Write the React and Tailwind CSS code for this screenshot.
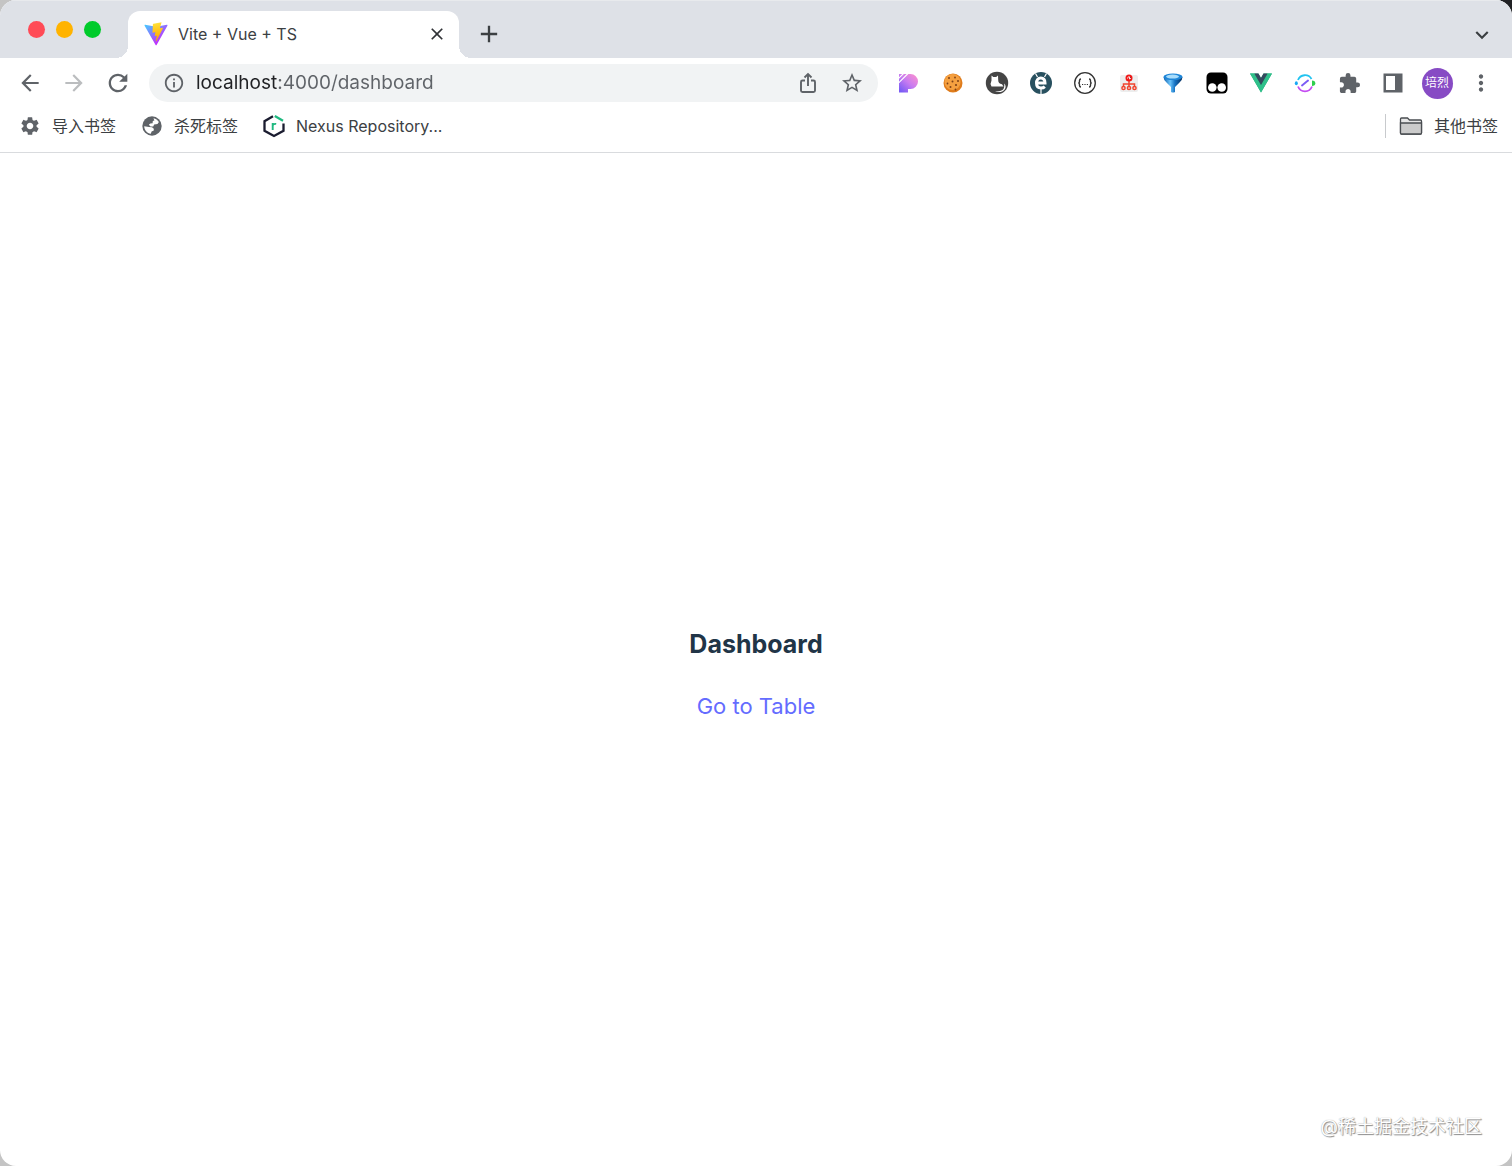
import React, { useState } from "react";
import {
  MdAdd,
  MdArrowBack,
  MdArrowForward,
  MdClose,
  MdExpandMore,
  MdExtension,
  MdInfoOutline,
  MdMoreVert,
  MdRefresh,
  MdSettings,
  MdStarOutline,
} from "react-icons/md";

const ViteLogo = () => (
  <svg width="24" height="24" viewBox="0 0 410 404">
    <defs>
      <linearGradient id="viteA" x1="6" y1="33" x2="235" y2="344" gradientUnits="userSpaceOnUse">
        <stop stopColor="#41D1FF" />
        <stop offset="1" stopColor="#BD34FE" />
      </linearGradient>
      <linearGradient id="viteB" x1="194" y1="8" x2="236" y2="292" gradientUnits="userSpaceOnUse">
        <stop stopColor="#FFEA83" />
        <stop offset="0.08" stopColor="#FFDD35" />
        <stop offset="1" stopColor="#FFA800" />
      </linearGradient>
    </defs>
    <path
      fill="url(#viteA)"
      d="M399.6 59.5 215.6 388.500c-3.800 6.800-13.500 6.800-17.400.1L10.600 59.500c-4.200-7.300 2.100-16.200 10.400-14.700l184.200 32.900c1.200.2 2.400.2 3.500 0l180.300-32.900c8.300-1.500 14.600 7.300 10.500 14.700z"
    />
    <path
      fill="url(#viteB)"
      d="M293 1.600 156.800 28.300c-2.200.4-3.900 2.300-4 4.600l-8.400 141.500c-.2 3.300 2.900 5.900 6.100 5.200l37.900-8.800c3.500-.8 6.700 2.300 6 5.900l-11.300 55.200c-.8 3.700 2.700 6.900 6.400 5.800l23.400-7.100c3.600-1.100 7.100 2.100 6.400 5.800l-17.900 86.700c-1.100 5.400 6.100 8.400 9.100 3.700l2-3.100L323.500 102.300c1.900-3.700-1.300-7.900-5.400-7.100l-39 7.500c-3.700.7-6.800-2.700-5.700-6.200l25.400-88.200c1.100-3.600-2.100-7.100-5.800-6.700z"
    />
  </svg>
);

const ShareIcon = () => (
  <svg width="22" height="24" viewBox="0 0 22 24" fill="none" stroke="currentColor" strokeWidth="1.9">
    <path d="M8 9.500H5.500Q4 9.500 4 11v8.500Q4 21 5.500 21h11Q18 21 18 19.500V11q0-1.500-1.500-1.500H14" />
    <path d="M11 15V3.500M7.500 6.500 11 3l3.500 3.500" />
  </svg>
);

const SidePanelIcon = () => (
  <svg width="20" height="20" viewBox="0 0 20 20">
    <path fill="#5f6368" fillRule="evenodd" d="M.5.500h19v19H.5zM3 3v14h9V3z" />
  </svg>
);

const PasteIcon = () => (
  <svg width="20" height="20" viewBox="0 0 20 20">
    <defs>
      <linearGradient id="pGrad" x1="18" y1="2" x2="3" y2="19" gradientUnits="userSpaceOnUse">
        <stop stopColor="#fb8fd0" />
        <stop offset="0.5" stopColor="#c97cf0" />
        <stop offset="1" stopColor="#7a5cf5" />
      </linearGradient>
    </defs>
    <path fill="url(#pGrad)" d="M0 1h11.500a7.500 7.500 0 0 1 0 15H9v3.500H0z" />
    <path stroke="#fff" strokeWidth="1.200" d="M-1 6 5 0M-1 10.500 9.500 0" />
  </svg>
);

const CookieIcon = () => (
  <svg width="20" height="20" viewBox="0 0 20 20">
    <circle cx="10" cy="10" r="9.500" fill="#df7c1c" />
    <circle cx="9.500" cy="9" r="8" fill="#f5a040" />
    <g fill="#7d4016">
      <circle cx="6" cy="5" r="1" />
      <circle cx="12" cy="4.500" r="0.900" />
      <circle cx="9.500" cy="8.500" r="1" />
      <circle cx="15" cy="8" r="1" />
      <circle cx="4.500" cy="10.500" r="0.900" />
      <circle cx="13" cy="12" r="1.100" />
      <circle cx="7.500" cy="14" r="1" />
      <circle cx="12.500" cy="16.500" r="0.900" />
    </g>
  </svg>
);

const CatIcon = () => (
  <svg width="24" height="24" viewBox="0 0 24 24">
    <circle cx="12" cy="12" r="11.200" fill="#454545" />
    <path
      fill="#fff"
      d="M6.500 4.500 8.300 6h2.900l1.800-1.500.2 4.500c0 2.500 1.300 3.800 3.800 4.200l1.500 2.300H6.500q-1.700-3 0-6z"
    />
    <path
      fill="#fff"
      d="M19.300 12.500c2.400 2.700 1.300 6.300-1.600 7.700-2.500 1.200-5.700 1.200-7.700.1 3 .2 5.800 0 7.500-1.200 1.600-1.200 2-3.800 1.800-6.600z"
    />
  </svg>
);

const EditIcon = () => (
  <svg width="24" height="24" viewBox="0 0 24 24" fill="none">
    <circle cx="12" cy="12" r="11" fill="#28505f" />
    <path stroke="#fff" strokeWidth="3" d="M7.500 12h8.500c0-3-1.500-5-4.200-5S7.500 9 7.500 12s1.700 5 4.500 5c1.500 0 2.800-.4 3.800-1.400" />
    <path stroke="#fff" strokeWidth="1.200" d="m6.500 2.500 2 3.500M17.500 2.500l-2 3.500M12 18v5" />
  </svg>
);

const JsonIcon = () => (
  <svg width="24" height="24" viewBox="0 0 24 24" fill="none" stroke="#333">
    <circle cx="12" cy="12" r="10.300" strokeWidth="1.300" />
    <path
      strokeWidth="1.400"
      d="M8 8q-1.500 0-1.500 1.500v1q0 1.500-1.200 1.500 1.200 0 1.200 1.500v1Q6.500 16 8 16M16 8q1.500 0 1.500 1.500v1q0 1.500 1.200 1.500-1.200 0-1.200 1.500v1q0 1.500-1.500 1.500"
    />
    <path strokeWidth="1.200" strokeDasharray="1.200 1.200" d="M9 13.500h6.500" />
  </svg>
);

const SitemapIcon = () => (
  <svg width="20" height="20" viewBox="0 0 20 20">
    <rect x="1" y="2" width="18" height="17" rx="2" fill="#ededed" />
    <g fill="none" stroke="#f0452f" strokeWidth="1.500">
      <path d="M10 7v6M4.500 14v-3h11v3" />
      <circle cx="4.500" cy="15" r="1.600" />
      <circle cx="10" cy="15" r="1.600" />
      <circle cx="15.500" cy="15" r="1.600" />
    </g>
    <circle cx="10" cy="5" r="3.500" fill="#f01818" />
    <path stroke="#fff" strokeWidth="0.900" d="m8.500 5.500 1-2M10.500 3.500v2.500l1.500-1" />
  </svg>
);

const FunnelIcon = () => (
  <svg width="20" height="20" viewBox="0 0 20 20">
    <defs>
      <linearGradient id="funnel" x1="0" x2="1">
        <stop stopColor="#0d5fae" />
        <stop offset="0.35" stopColor="#6cc4fa" />
        <stop offset="0.6" stopColor="#1673c4" />
        <stop offset="1" stopColor="#0a2f5c" />
      </linearGradient>
    </defs>
    <path fill="url(#funnel)" d="M.5 4q0 3 3 5.500L8 14v5q2 1 4 0v-5l4.500-4.500q3-2.500 3-5.500z" />
    <ellipse cx="10" cy="3.800" rx="9.500" ry="3.300" fill="#1e86d8" />
    <ellipse cx="9.500" cy="3.600" rx="6.500" ry="2" fill="#a8dcfb" />
  </svg>
);

const MonkeyIcon = () => (
  <svg width="22" height="22" viewBox="0 0 22 22">
    <rect x="0.500" y="0.500" width="21" height="21" rx="4.500" fill="#000" />
    <circle cx="6.300" cy="15.500" r="4.300" fill="#fff" />
    <circle cx="15.700" cy="15.500" r="4.300" fill="#fff" />
  </svg>
);

const VueIcon = () => (
  <svg width="22" height="20" viewBox="0 0 256 221">
    <path fill="#1fae78" d="M204.800 0H256L128 220.800 0 0h97.900L128 51.200 157.400 0z" />
    <path fill="#2fc08a" d="M0 0l128 220.800L256 0h-51.200L128 132.500 50.600 0z" />
    <path fill="#35495E" d="M50.600 0 128 133.100 204.800 0h-47.400L128 51.200 97.900 0z" />
  </svg>
);

const ProxyIcon = () => (
  <svg width="22" height="20" viewBox="0 0 22 20" fill="none" strokeWidth="1.800">
    <path stroke="#22c3f0" d="M4 7a7.500 7.500 0 0 1 13.500-1" />
    <path stroke="#c44cf2" d="M4 13.500a7.500 7.500 0 0 0 14 0" />
    <path stroke="#7b5cf5" strokeWidth="1.900" strokeLinecap="round" d="m8 12.500 6-5" />
    <ellipse cx="2.300" cy="10.200" rx="1.500" ry="2" fill="#18a8f5" />
    <path fill="#2fcf4e" d="M18 7.500q3.300 0 3.300 2.700T18 13z" />
  </svg>
);

const GlobeIcon = () => (
  <svg width="22" height="22" viewBox="0 0 22 22">
    <circle cx="11" cy="11" r="9.700" fill="#5f6368" />
    <path
      fill="#fff"
      d="M12.500 3.200c2.300.4 4.200 1.800 5.400 3.700L16.500 9l-3.300.4-1 2.200-2.700-.1-1.700-1.700 1.500-1.300 2.300-.2.200-2.300 1.600-.6z"
    />
    <path
      fill="#fff"
      d="M3.200 11.200 8 12l3 .2 1.800 1.600v1.800l-2.200.8-.8 2.400c-3.700-.5-6.500-3.700-6.600-7.600z"
    />
  </svg>
);

const NexusIcon = () => (
  <svg width="24" height="24" viewBox="0 0 24 24" fill="none" strokeWidth="2.300">
    <path stroke="#1b1c30" d="M11 2.300 2.500 7.200v9.600L12 22l9.500-5.200V9.500" />
    <path stroke="#1fb980" d="m12.800 2 8.200 4.800" />
    <path stroke="#1fb980" strokeWidth="1.900" d="M10.700 16V9M10.700 11.500q.6-2 3.500-1.600" />
  </svg>
);

const FolderIcon = () => (
  <svg width="24" height="20" viewBox="0 0 24 20" stroke="#4a4d51" strokeWidth="1.300">
    <path fill="#e6e6e6" d="M1.500 17V3q0-1 1-1h6l2 2h11q1 0 1 1v12q0 1-1 1h-19q-1 0-1-1z" />
    <path fill="#cbcbcb" d="M1.500 7h21v10q0 1-1 1h-19q-1 0-1-1z" />
  </svg>
);

const extensions = [
  { name: "Paste", icon: <PasteIcon /> },
  { name: "Cookies", icon: <CookieIcon /> },
  { name: "Cat", icon: <CatIcon /> },
  { name: "Edit", icon: <EditIcon /> },
  { name: "JSON", icon: <JsonIcon /> },
  { name: "Sitemap", icon: <SitemapIcon /> },
  { name: "Filter", icon: <FunnelIcon /> },
  { name: "Scripts", icon: <MonkeyIcon /> },
  { name: "Vue devtools", icon: <VueIcon /> },
  { name: "Proxy", icon: <ProxyIcon /> },
  { name: "Extensions", icon: <MdExtension size={23} /> },
  { name: "Side panel", icon: <SidePanelIcon /> },
];

const bookmarks = [
  { title: "导入书签", icon: <MdSettings size={22} /> },
  { title: "杀死标签", icon: <GlobeIcon /> },
  { title: "Nexus Repository...", icon: <NexusIcon /> },
];

const ToolButton = ({ label, className = "", children }) => (
  <button
    type="button"
    aria-label={label}
    className={`flex h-9 w-11 shrink-0 items-center justify-center ${className}`}
  >
    {children}
  </button>
);

const TabStrip = () => (
  <div className="flex h-[58px] items-end border-t border-[#e8eaed] bg-[#dee1e7]">
    <div className="flex h-full w-32 shrink-0 items-center gap-[11px] pl-7">
      <button type="button" aria-label="Close window" className="size-[17px] rounded-full bg-[#ff4b57]" />
      <button type="button" aria-label="Minimize" className="size-[17px] rounded-full bg-[#ffb300]" />
      <button type="button" aria-label="Zoom" className="size-[17px] rounded-full bg-[#00cb2b]" />
    </div>
    <div className="relative flex h-[47px] w-[331px] items-center rounded-t-xl bg-white pb-px pl-4 pr-3 before:absolute before:bottom-0 before:-left-3 before:size-3 before:bg-[radial-gradient(circle_at_top_left,transparent_12px,white_12px)] after:absolute after:bottom-0 after:-right-3 after:size-3 after:bg-[radial-gradient(circle_at_top_left,transparent_12px,white_12px)] after:-scale-x-100">
      <ViteLogo />
      <span className="ml-[10px] flex-1 text-base text-[#3c4043]">Vite + Vue + TS</span>
      <button type="button" aria-label="Close tab" className="text-[#303236]">
        <MdClose size={20} />
      </button>
    </div>
    <button type="button" aria-label="New tab" className="mb-[10px] ml-4 text-[#3c4043]">
      <MdAdd size={28} />
    </button>
    <button type="button" aria-label="Search tabs" className="mb-[10px] ml-auto mr-[17px] text-[#3c4043]">
      <MdExpandMore size={26} />
    </button>
  </div>
);

const Toolbar = () => {
  const [url, setUrl] = useState("localhost:4000/dashboard");

  return (
    <div className="flex h-[50px] items-center pl-2 pr-[9px] text-[#5f6368]">
      <ToolButton label="Back">
        <MdArrowBack size={26} />
      </ToolButton>
      <ToolButton label="Forward" className="text-[#bbbdbf]">
        <MdArrowForward size={26} />
      </ToolButton>
      <ToolButton label="Reload">
        <MdRefresh size={28} />
      </ToolButton>
      <div className="mx-[9px] flex h-[38px] min-w-0 flex-1 items-center rounded-full bg-[#f1f3f4] pl-[14px] pr-1">
        <MdInfoOutline size={22} className="shrink-0" />
        <input
          type="text"
          aria-label="Address"
          value={url}
          onChange={(e) => setUrl(e.target.value)}
          className="ml-[11px] min-w-0 flex-1 bg-[linear-gradient(to_right,#202124_81px,#5f6368_81px)] bg-clip-text text-[19px] leading-7 text-transparent outline-none"
        />
        <ToolButton label="Share">
          <ShareIcon />
        </ToolButton>
        <ToolButton label="Bookmark this page">
          <MdStarOutline size={24} />
        </ToolButton>
      </div>
      {extensions.map((ext) => (
        <ToolButton key={ext.name} label={ext.name}>
          {ext.icon}
        </ToolButton>
      ))}
      <ToolButton label="Profile">
        <span className="flex size-[31px] items-center justify-center rounded-full bg-[#874bc4] text-xs text-white">
          培烈
        </span>
      </ToolButton>
      <ToolButton label="Menu">
        <MdMoreVert size={26} />
      </ToolButton>
    </div>
  );
};

const BookmarkBar = () => (
  <nav className="flex h-[45px] items-center gap-6 border-b border-[#d9dbde] pl-[18px] pr-[14px] pb-2 text-[#3c4043]">
    {bookmarks.map((item) => (
      <a key={item.title} href="#" className="flex items-center gap-[10px]">
        <span className="flex w-6 justify-center text-[#5f6368]">{item.icon}</span>
        <span className="text-base">{item.title}</span>
      </a>
    ))}
    <a href="#" className="ml-auto flex items-center gap-[11px] border-l border-[#c8cacd] pl-[13px]">
      <FolderIcon />
      <span className="text-base">其他书签</span>
    </a>
  </nav>
);

const App = () => {
  return (
    <div className="min-h-screen bg-[linear-gradient(to_bottom_left,#202124_20%,#c4c4c4_20%)] font-[Inter,'Noto_Sans_CJK_SC',sans-serif]">
      <div className="relative flex min-h-screen flex-col overflow-hidden rounded-2xl bg-white">
        <header>
          <TabStrip />
          <Toolbar />
          <BookmarkBar />
        </header>
        <main className="flex flex-1 flex-col items-center justify-center gap-7 pt-7">
          <h1 className="text-[25px] leading-9 font-bold text-[#213547]">Dashboard</h1>
          <a href="#table" className="text-[22px] leading-8 text-[#646cff]">
            Go to Table
          </a>
        </main>
        <p className="absolute right-[30px] bottom-[26px] text-lg leading-[26px] text-white [text-shadow:0_0_1px_#999,1px_1px_1px_#888]">
          @稀土掘金技术社区
        </p>
      </div>
    </div>
  );
};

export default App;
